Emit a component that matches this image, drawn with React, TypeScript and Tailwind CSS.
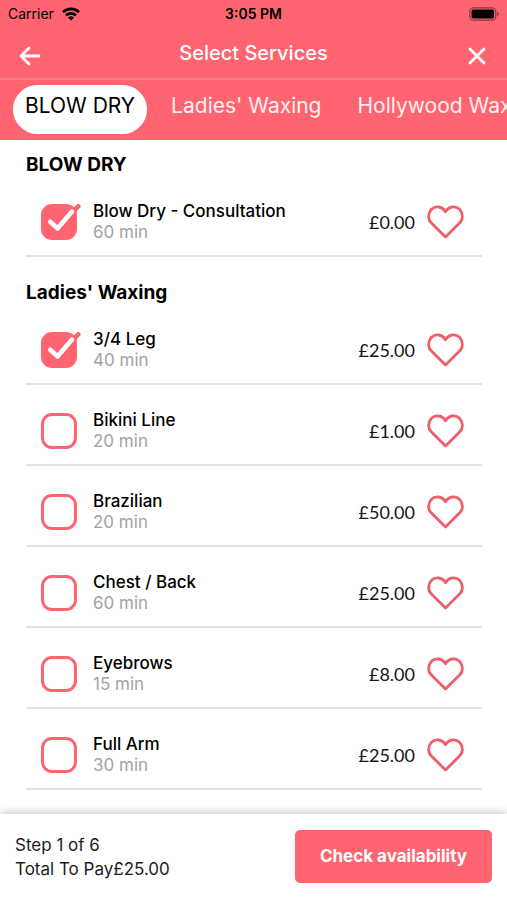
import { useState } from 'react';

type Service = { id: string; name: string; duration: string; price: string };
type Group = { title: string; services: Service[] };

const tabs = ['BLOW DRY', "Ladies' Waxing", 'Hollywood Waxing'];

const groups: Group[] = [
  {
    title: 'BLOW DRY',
    services: [{ id: 'consultation', name: 'Blow Dry - Consultation', duration: '60 min', price: '£0.00' }],
  },
  {
    title: "Ladies' Waxing",
    services: [
      { id: 'leg', name: '3/4 Leg', duration: '40 min', price: '£25.00' },
      { id: 'bikini', name: 'Bikini Line', duration: '20 min', price: '£1.00' },
      { id: 'brazilian', name: 'Brazilian', duration: '20 min', price: '£50.00' },
      { id: 'chest', name: 'Chest / Back', duration: '60 min', price: '£25.00' },
      { id: 'eyebrows', name: 'Eyebrows', duration: '15 min', price: '£8.00' },
      { id: 'arm', name: 'Full Arm', duration: '30 min', price: '£25.00' },
    ],
  },
];

function StatusBar() {
  return (
    <div className="grid h-7 grid-cols-3 items-center px-2 text-sm text-black">
      <div className="flex items-center gap-2">
        <span>Carrier</span>
        <svg viewBox="0 0 18 14" className="h-3.5 w-[18px]" fill="none" stroke="currentColor" strokeWidth="2.6">
          <path d="M1 5.2a11.4 11.4 0 0 1 16 0" />
          <path d="M4 8.4a7.2 7.2 0 0 1 10 0" />
          <path d="M9 13.6 6.1 10.7a4.1 4.1 0 0 1 5.8 0Z" fill="currentColor" stroke="none" />
        </svg>
      </div>
      <span className="text-center font-semibold">3:05 PM</span>
      <svg viewBox="0 0 30 14" className="h-3.5 w-[30px] justify-self-end">
        <rect x="0.8" y="0.8" width="26" height="12.4" rx="3.6" fill="none" stroke="#000" strokeOpacity="0.45" strokeWidth="1.2" />
        <rect x="2.5" y="2.5" width="22.6" height="9" rx="2" />
        <path d="M28.2 5v4c.9-.3 1.4-1.1 1.4-2s-.5-1.7-1.4-2Z" fillOpacity="0.5" />
      </svg>
    </div>
  );
}

function ServiceRow({ service, checked, liked, onToggle, onLike }: {
  service: Service;
  checked: boolean;
  liked: boolean;
  onToggle: () => void;
  onLike: () => void;
}) {
  return (
    <li className="flex items-center border-b-2 border-[#e2e2e2] pt-[25px] pr-[17px] pb-3 pl-[15px]">
      <div className="relative size-9 shrink-0">
        <input
          id={service.id}
          type="checkbox"
          checked={checked}
          onChange={onToggle}
          className="block size-9 cursor-pointer appearance-none rounded-[11px] border-[3px] border-[#fe6570] checked:bg-[#fe6570]"
        />
        {checked && (
          <svg viewBox="0 0 40 36" className="pointer-events-none absolute top-0 left-0 h-9 w-10" fill="none" strokeLinecap="round" strokeLinejoin="round">
            <path d="M32 7.4 37.3 2.4" stroke="#fe6570" strokeWidth="4.6" />
            <path d="M9.2 17.8 16.4 24.4 31 7.4" stroke="#fff" strokeWidth="4.6" />
            <path d="M31.6 3.6 35.2 7.2" stroke="#fe6570" strokeWidth="2" />
          </svg>
        )}
      </div>
      <label htmlFor={service.id} className="ml-4 flex-1 cursor-pointer text-[17px] leading-[21px]">
        <span className="block font-medium text-black">{service.name}</span>
        <span className="block text-[#a3a3a3]">{service.duration}</span>
      </label>
      <span className="font-[Lato,sans-serif] text-lg leading-[21px] text-[#151515]">{service.price}</span>
      <button type="button" aria-label={`Favourite ${service.name}`} aria-pressed={liked} onClick={onLike} className="ml-3 shrink-0 cursor-pointer">
        <svg viewBox="0 0 38 34" className="block h-[34px] w-[38px]" fill={liked ? '#fe6570' : 'none'} stroke="#ee5f6c" strokeWidth="2.8" strokeLinejoin="round">
          <path d="M18.500 6.800C15.200 1 8.200.5 4.200 4.600.7 8.600.7 14.300 4.200 17.800L18.500 32 32.800 17.800C36.300 14.300 36.300 8.600 32.800 4.600 28.800.5 21.800 1 18.500 6.800Z" />
        </svg>
      </button>
    </li>
  );
}

export default function App() {
  const [activeTab, setActiveTab] = useState(tabs[0]);
  const [selected, setSelected] = useState<string[]>(['consultation', 'leg']);
  const [favourites, setFavourites] = useState<string[]>([]);

  const toggle = (list: string[], id: string) =>
    list.includes(id) ? list.filter((item) => item !== id) : [...list, id];

  return (
    <div className="flex min-h-screen flex-col bg-white font-[Inter,sans-serif]">
      <header className="bg-[#fe6570] text-white">
        <StatusBar />
        <div className="flex h-[50px] items-center justify-between px-[18px]">
          <button type="button" aria-label="Back" className="cursor-pointer pt-1.5">
            <svg viewBox="0 0 24 24" className="block size-6" fill="none" stroke="currentColor" strokeWidth="2.8" strokeLinecap="round" strokeLinejoin="round">
              <path d="M21 12H3.5M11 4 3 12l8 8" />
            </svg>
          </button>
          <h1 className="text-xl font-medium">Select Services</h1>
          <button type="button" aria-label="Close" className="cursor-pointer pt-1.5">
            <svg viewBox="0 0 24 24" className="block size-6" fill="none" stroke="currentColor" strokeWidth="2.8" strokeLinecap="round">
              <path d="m5 5 14 14M19 5 5 19" />
            </svg>
          </button>
        </div>
        <nav className="flex gap-3 overflow-hidden border-t-2 border-[#ff7d86] px-[13px] pt-[5px] pb-1.5">
          {tabs.map((tab) => (
            <button
              key={tab}
              type="button"
              onClick={() => setActiveTab(tab)}
              className={`h-[49px] shrink-0 cursor-pointer rounded-full px-3 pb-2 text-[21px] whitespace-nowrap ${
                tab === activeTab ? 'bg-white text-black' : 'text-white/90'
              }`}
            >
              {tab}
            </button>
          ))}
        </nav>
      </header>

      <main className="flex flex-1 flex-col gap-[25px] pt-3.5 pr-[25px] pb-5 pl-[26px]">
        {groups.map((group) => (
          <section key={group.title}>
            <h2 className="text-[19px] leading-[22px] font-bold text-black">{group.title}</h2>
            <ul>
              {group.services.map((service) => (
                <ServiceRow
                  key={service.id}
                  service={service}
                  checked={selected.includes(service.id)}
                  liked={favourites.includes(service.id)}
                  onToggle={() => setSelected(toggle(selected, service.id))}
                  onLike={() => setFavourites(toggle(favourites, service.id))}
                />
              ))}
            </ul>
          </section>
        ))}
      </main>

      <footer className="sticky bottom-0 flex items-center justify-between bg-white px-[15px] pt-4 pb-[17px] shadow-[0_-2px_8px_rgba(0,0,0,0.2)]">
        <div className="text-[17px] leading-6 text-[#1c1c1c]">
          <p>Step 1 of 6</p>
          <p>Total To Pay£25.00</p>
        </div>
        <button type="button" className="h-[53px] cursor-pointer rounded-[5px] bg-[#fe6570] px-[25px] text-[17px] font-bold text-white">
          Check availability
        </button>
      </footer>
    </div>
  );
}
